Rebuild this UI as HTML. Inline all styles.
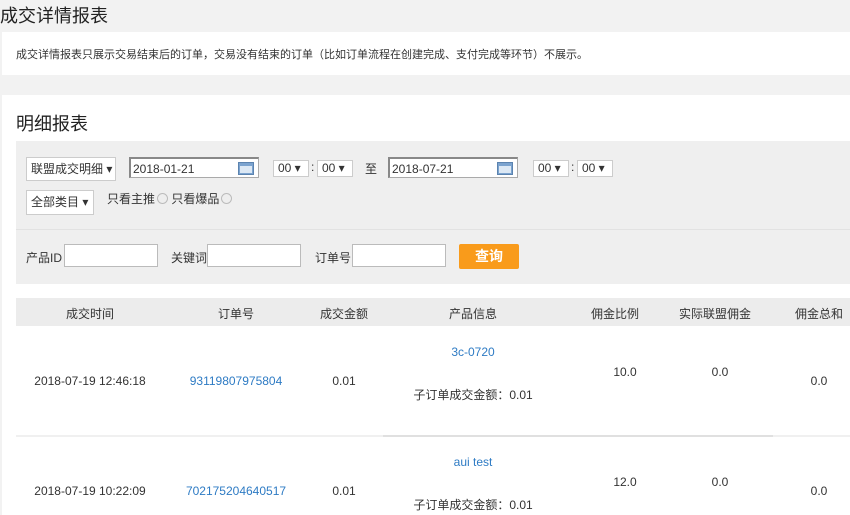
<!DOCTYPE html>
<html><head><meta charset="utf-8"><style>
*{margin:0;padding:0;box-sizing:border-box}
body{width:850px;height:515px;overflow:hidden;background:#f2f2f2;font-family:"Liberation Sans","Noto Sans CJK SC",sans-serif;color:#333;position:relative;font-size:12px}
.a{position:absolute;white-space:nowrap}
.sel{position:absolute;background:#fff;border:1px solid #ccc;font-size:12px;line-height:20px;padding-left:4px}
.inp{position:absolute;background:#fff;border:1px solid #bbb}
.date{position:absolute;background:#fff;border:1px solid #aaa;border-left:2px solid #888;border-top:2px solid #888;font-size:12px;line-height:20px;padding-left:2px}
.cal{position:absolute;right:4px;top:3px;width:16px;height:13px;background:#7ba3cf;border:1px solid #5b83af}
.cal:after{content:"";position:absolute;left:1px;right:1px;bottom:1px;height:7px;background:#dce8f4}
.rad{display:inline-block;width:11px;height:11px;border:1px solid #bbb;border-radius:50%;background:#eee;vertical-align:-1px;margin-left:2px}
.c{position:absolute;text-align:center;font-size:12px}
.blue{color:#2e7bc4}
</style></head><body>
<div class="a" style="left:0;top:2px;font-size:18px;color:#222">成交详情报表</div>
<div class="a" style="left:2px;top:32px;width:848px;height:43px;background:#fff"></div>
<div class="a" style="left:16px;top:46px;font-size:11px;color:#333">成交详情报表只展示交易结束后的订单，交易没有结束的订单（比如订单流程在创建完成、支付完成等环节）不展示。</div>
<div class="a" style="left:2px;top:95px;width:848px;height:420px;background:#fff"></div>
<div class="a" style="left:16px;top:110px;font-size:18px;color:#222">明细报表</div>
<div class="a" style="left:16px;top:141px;width:834px;height:143px;background:#efefef"></div>
<div class="a" style="left:16px;top:229px;width:834px;height:1px;background:#e2e2e2"></div>
<div class="sel" style="left:26px;top:157px;width:90px;height:24px;line-height:22px">联盟成交明细 ▾</div>
<div class="date" style="left:129px;top:157px;width:130px;height:21px">2018-01-21<span class="cal"></span></div>
<div class="sel" style="left:273px;top:160px;width:36px;height:17px;line-height:15px">00 ▾</div>
<div class="a" style="left:311px;top:160px">:</div>
<div class="sel" style="left:317px;top:160px;width:36px;height:17px;line-height:15px">00 ▾</div>
<div class="a" style="left:365px;top:160px">至</div>
<div class="date" style="left:388px;top:157px;width:130px;height:21px">2018-07-21<span class="cal"></span></div>
<div class="sel" style="left:533px;top:160px;width:36px;height:17px;line-height:15px">00 ▾</div>
<div class="a" style="left:571px;top:160px">:</div>
<div class="sel" style="left:577px;top:160px;width:36px;height:17px;line-height:15px">00 ▾</div>
<div class="sel" style="left:26px;top:190px;width:68px;height:25px;line-height:23px">全部类目 ▾</div>
<div class="a" style="left:107px;top:190px">只看主推<span class="rad"></span> 只看爆品<span class="rad"></span></div>
<div class="a" style="left:26px;top:249px">产品ID</div>
<div class="inp" style="left:64px;top:244px;width:94px;height:23px"></div>
<div class="a" style="left:171px;top:249px">关键词</div>
<div class="inp" style="left:207px;top:244px;width:94px;height:23px"></div>
<div class="a" style="left:315px;top:249px">订单号</div>
<div class="inp" style="left:352px;top:244px;width:94px;height:23px"></div>
<div class="a" style="left:459px;top:244px;width:60px;height:25px;background:#f99b1b;border-radius:2px;color:#fff;font-size:14px;font-weight:bold;text-align:center;line-height:25px">查询</div>
<div class="a" style="left:16px;top:298px;width:834px;height:28px;background:#ececec"></div>
<div class="c" style="left:30px;width:120px;top:305px">成交时间</div>
<div class="c" style="left:176px;width:120px;top:305px">订单号</div>
<div class="c" style="left:284px;width:120px;top:305px">成交金额</div>
<div class="c" style="left:413px;width:120px;top:305px">产品信息</div>
<div class="c" style="left:555px;width:120px;top:305px">佣金比例</div>
<div class="c" style="left:655px;width:120px;top:305px">实际联盟佣金</div>
<div class="c" style="left:759px;width:120px;top:305px">佣金总和</div>
<div class="c" style="left:30px;width:120px;top:374px">2018-07-19 12:46:18</div>
<div class="c blue" style="left:176px;width:120px;top:374px">93119807975804</div>
<div class="c" style="left:284px;width:120px;top:374px">0.01</div>
<div class="c blue" style="left:413px;width:120px;top:345px">3c-0720</div>
<div class="c" style="left:413px;width:120px;top:386px">子订单成交金额：0.01</div>
<div class="c" style="left:565px;width:120px;top:365px">10.0</div>
<div class="c" style="left:660px;width:120px;top:365px">0.0</div>
<div class="c" style="left:759px;width:120px;top:374px">0.0</div>
<div class="a" style="left:16px;top:435px;width:834px;height:2px;background:#f0f0f0"></div>
<div class="a" style="left:383px;top:435px;width:390px;height:2px;background:#e0e0e0"></div>
<div class="c" style="left:30px;width:120px;top:484px">2018-07-19 10:22:09</div>
<div class="c blue" style="left:176px;width:120px;top:484px">702175204640517</div>
<div class="c" style="left:284px;width:120px;top:484px">0.01</div>
<div class="c blue" style="left:413px;width:120px;top:455px">aui test</div>
<div class="c" style="left:413px;width:120px;top:496px">子订单成交金额：0.01</div>
<div class="c" style="left:565px;width:120px;top:475px">12.0</div>
<div class="c" style="left:660px;width:120px;top:475px">0.0</div>
<div class="c" style="left:759px;width:120px;top:484px">0.0</div>
</body></html>
